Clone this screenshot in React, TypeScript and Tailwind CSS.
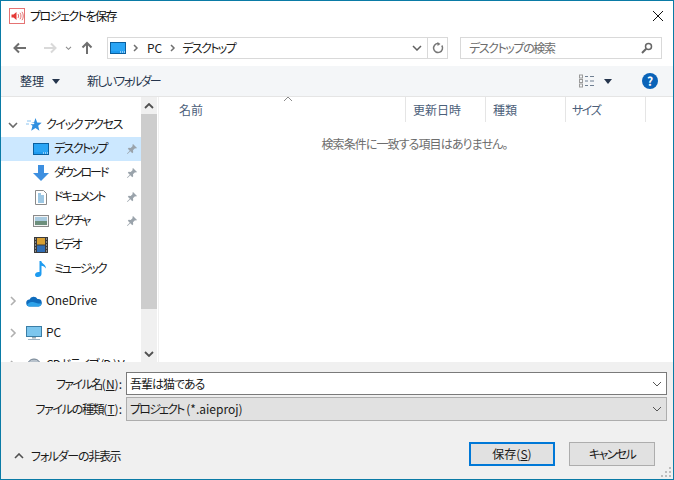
import React from "react";

const jp = "font-['Noto_Sans_CJK_JP','Noto_Sans',sans-serif] [font-feature-settings:'palt']";

function DesktopIcon({ className = "" }: { className?: string }) {
  return (
    <svg viewBox="0 0 16 12" className={className}>
      <rect x="0.5" y="0.5" width="15" height="11" fill="#1e9bf0" stroke="#0a5f9e" />
      <rect x="1" y="1" width="14" height="8" fill="#2aa5f5" />
      <rect x="10" y="9.500" width="1" height="1" fill="#fff" />
      <rect x="12" y="9.500" width="1" height="1" fill="#fff" />
      <rect x="14" y="9.500" width="1" height="1" fill="#fff" />
    </svg>
  );
}

function Pin() {
  return (
    <svg viewBox="0 0 12 12" className="h-3 w-3">
      <path d="M7 1l4 4-1 .6-1-.3-2 2 .2 2-.9.9-2-2L1.500 11 1 10.500l2.800-2.800-2-2 .9-.9 2 .2 2-2-.3-1z" fill="#9aa3ab" />
    </svg>
  );
}

function Chevron({ open }: { open?: boolean }) {
  return (
    <svg viewBox="0 0 10 10" className="h-2.5 w-2.5">
      {open ? (
        <path d="M1 3l4 4 4-4" fill="none" stroke="#6a6a6a" strokeWidth="1.600" />
      ) : (
        <path d="M3 1l4 4-4 4" fill="none" stroke="#b0b0b0" strokeWidth="1.600" />
      )}
    </svg>
  );
}

function Row({
  icon,
  label,
  pinned,
  active,
  track = "tracking-[-1.7px]",
}: {
  icon: React.ReactNode;
  label: string;
  pinned?: boolean;
  active?: boolean;
  track?: string;
}) {
  return (
    <div className={`flex h-6 items-center pl-[32px] pr-[3px] ${active ? "bg-[#cce8ff]" : ""}`}>
      <div className="flex w-[16px] justify-center">{icon}</div>
      <span className={`ml-[5px] flex-1 whitespace-nowrap pb-[2px] text-[12px] text-[#1a1a1a] ${track}`}>{label}</span>
      {pinned && <Pin />}
    </div>
  );
}

function TreeRoot({
  icon,
  label,
  open,
  track = "",
}: {
  icon: React.ReactNode;
  label: string;
  open?: boolean;
  track?: string;
}) {
  return (
    <div className="flex h-6 items-center pl-[7px]">
      <div className="flex w-[17px]">
        <Chevron open={open} />
      </div>
      <div className="flex w-[18px] justify-center">{icon}</div>
      <span className={`ml-[3px] whitespace-nowrap pb-[2px] text-[12px] text-[#1a1a1a] ${track}`}>{label}</span>
    </div>
  );
}

function HeaderCell({ label, className }: { label: string; className: string }) {
  return (
    <div className={`flex h-[25px] items-center border-r border-[#e5e5e5] text-[12px] text-[#4c607a] ${className}`}>
      {label}
    </div>
  );
}

function SelectChevron() {
  return (
    <svg viewBox="0 0 10 6" className="h-[6px] w-[10px]">
      <path d="M1 1l4 4 4-4" fill="none" stroke="#555" strokeWidth="1" />
    </svg>
  );
}

export default function App() {
  return (
    <div className={`flex h-[480px] w-[674px] flex-col overflow-hidden border border-[#0a7ba6] bg-white ${jp}`}>
      {/* title bar */}
      <div className="flex h-[29px] shrink-0 items-center pl-[8px] pr-[9px]">
        <svg viewBox="0 0 16 16" className="h-4 w-4">
          <rect x="0.5" y="0.5" width="15" height="15" fill="#fff" stroke="#e57373" />
          <path d="M2.500 6.500h2l3-2.500v8l-3-2.500h-2z" fill="#e53935" />
          <path d="M9 6c.8 1.200.8 2.800 0 4M11 4.800c1.300 2 1.300 4.400 0 6.400M13 3.800c1.700 2.600 1.700 5.800 0 8.400" fill="none" stroke="#e57373" />
        </svg>
        <span className="ml-[5px] flex-1 text-[12px] tracking-[-1.5px] text-[#111]">プロジェクトを保存</span>
        <svg viewBox="0 0 12 12" className="h-3 w-3">
          <path d="M1 1l10 10M11 1L1 11" stroke="#111" strokeWidth="1" />
        </svg>
      </div>

      {/* address row */}
      <div className="flex h-[36px] shrink-0 items-start pt-[7px]">
        <div className="flex h-[22px] w-[106px] items-center">
          <svg viewBox="0 0 14 12" className="ml-[12px] h-3 w-[14px]">
            <path d="M13 6H2M6 1.500L1.500 6 6 10.500" fill="none" stroke="#6f6f6f" strokeWidth="2" />
          </svg>
          <svg viewBox="0 0 14 12" className="ml-[16px] h-3 w-[14px]">
            <path d="M1 6h11M8 1.500L12.500 6 8 10.500" fill="none" stroke="#d9d9d9" strokeWidth="2" />
          </svg>
          <svg viewBox="0 0 8 6" className="ml-[8px] h-[5px] w-[7px]">
            <path d="M1 1l3 3 3-3" fill="none" stroke="#8a8a8a" strokeWidth="1.300" />
          </svg>
          <svg viewBox="0 0 12 14" className="ml-[9px] h-[14px] w-3">
            <path d="M6 13V2M1.500 6.500L6 2l4.500 4.500" fill="none" stroke="#6f6f6f" strokeWidth="2" />
          </svg>
        </div>
        <div className="flex h-[22px] w-[341px] items-center border border-[#d9d9d9]">
          <DesktopIcon className="ml-[2px] h-3 w-4" />
          <svg viewBox="0 0 6 8" className="ml-[7px] h-2 w-[6px]">
            <path d="M1 1l3 3-3 3" fill="none" stroke="#707070" strokeWidth="1.500" />
          </svg>
          <span className="ml-[8px] text-[12px] text-[#222]">PC</span>
          <svg viewBox="0 0 6 8" className="ml-[8px] h-2 w-[6px]">
            <path d="M1 1l3 3-3 3" fill="none" stroke="#707070" strokeWidth="1.500" />
          </svg>
          <span className="ml-[6px] flex-1 text-[12px] tracking-[-1.6px] text-[#222]">デスクトップ</span>
          <svg viewBox="0 0 10 6" className="mr-[5px] h-[6px] w-[10px]">
            <path d="M1 1l4 4 4-4" fill="none" stroke="#606060" strokeWidth="1.500" />
          </svg>
          <div className="flex h-full w-[20px] items-center justify-center border-l border-[#d9d9d9]">
            <svg viewBox="0 0 12 12" className="h-3 w-3">
              <path d="M9.800 3.500A4.500 4.500 0 1 1 6 1.500" fill="none" stroke="#777" strokeWidth="1.500" />
              <path d="M5.500 0v4l3-2z" fill="#777" />
            </svg>
          </div>
        </div>
        <div className="ml-[12px] flex h-[22px] w-[202px] items-center border border-[#d9d9d9] pl-[8px] pr-[8px]">
          <span className="flex-1 text-[12px] tracking-[-1.4px] text-[#6d6d6d]">デスクトップの検索</span>
          <svg viewBox="0 0 12 12" className="h-3 w-3">
            <circle cx="7.500" cy="4.500" r="3" fill="none" stroke="#666" strokeWidth="1.500" />
            <path d="M5.200 6.800L1 11" stroke="#666" strokeWidth="2" />
          </svg>
        </div>
      </div>

      {/* toolbar */}
      <div className="flex h-[31px] shrink-0 items-center border-b border-[#e5e5e5] bg-[#f4f6f8] pl-[19px] pr-[15px] text-[12px] text-[#25354d]">
        <span>整理</span>
        <svg viewBox="0 0 8 5" className="ml-[8px] h-[5px] w-2">
          <path d="M0 0h8L4 5z" fill="#25354d" />
        </svg>
        <span className="ml-[27px] flex-1 tracking-[-1.75px]">新しいフォルダー</span>
        <svg viewBox="0 0 16 14" className="h-[14px] w-4">
          <rect x="0.500" y="1" width="3" height="3" fill="none" stroke="#9a9a9a" strokeWidth="1" />
          <rect x="0.500" y="5.500" width="3" height="3" fill="none" stroke="#9a9a9a" strokeWidth="1" />
          <rect x="0.500" y="10" width="3" height="3" fill="none" stroke="#9a9a9a" strokeWidth="1" />
          <path d="M6 2.500h3M11 2.500h4M6 7h3M11 7h4M6 11.500h3M11 11.500h4" stroke="#6f7f92" strokeWidth="1" />
        </svg>
        <svg viewBox="0 0 8 5" className="ml-[9px] h-[5px] w-2">
          <path d="M0 0h8L4 5z" fill="#25354d" />
        </svg>
        <div className="ml-[30px] flex h-4 w-4 items-center justify-center rounded-full bg-[#0a63b8] text-[12px] font-bold leading-none text-white">
          ?
        </div>
      </div>

      {/* main */}
      <div className="flex min-h-0 flex-1">
        <div className="relative w-[140px] shrink-0 overflow-hidden pt-[16px]">
          <TreeRoot
            open
            label="クイック アクセス"
            track="tracking-[-1.3px]"
            icon={
              <svg viewBox="0 0 16 16" className="h-4 w-4">
                <path d="M9.500 1l1.700 4.500 4.500.3-3.500 3 1.200 5-3.900-2.700-4.300 2.700 1.300-5-2-1.600h3l1.200-1L5 5.500h3z" fill="#2f8fe0" />
                <path d="M1 4h4M0 7h3" stroke="#8cc4f0" strokeWidth="1" />
              </svg>
            }
          />
          <Row active pinned label="デスクトップ" track="tracking-[-1.6px]" icon={<DesktopIcon className="h-3 w-4" />} />
          <Row
            pinned
            label="ダウンロード"
            track="tracking-[-2px]"
            icon={
              <svg viewBox="0 0 16 16" className="h-4 w-4">
                <path d="M5 0h6v8h5l-8 8-8-8h5z" fill="#3d8fe0" />
              </svg>
            }
          />
          <Row
            pinned
            label="ドキュメント"
            track="tracking-[-1.8px]"
            icon={
              <svg viewBox="0 0 12 15" className="h-[15px] w-3">
                <path d="M.5.500h8l3 3v11H.5z" fill="#fff" stroke="#8a8a8a" />
                <path d="M3 4h3M3 6h6M3 8h6M3 10h6M3 12h6" stroke="#3a8fc8" strokeWidth="1" />
              </svg>
            }
          />
          <Row
            pinned
            label="ピクチャ"
            icon={
              <svg viewBox="0 0 16 12" className="h-3 w-4">
                <rect x="0.500" y="0.500" width="15" height="11" fill="#f4f4f4" stroke="#8a8a8a" />
                <rect x="2" y="2" width="12" height="4" fill="#a9cbe0" />
                <path d="M2 6h12v4H2z" fill="#6d8f7c" />
              </svg>
            }
          />
          <Row
            label="ビデオ"
            track="tracking-[-2.300px]"
            icon={
              <svg viewBox="0 0 14 16" className="h-4 w-[14px]">
                <rect width="14" height="16" fill="#3a3a3a" />
                <rect x="3" y="1" width="8" height="6.500" fill="#d8a032" />
                <rect x="3" y="8.500" width="8" height="6.500" fill="#2f6db5" />
                <path d="M1 2h1M1 5h1M1 8h1M1 11h1M1 14h1M12 2h1M12 5h1M12 8h1M12 11h1M12 14h1" stroke="#ddd" strokeWidth="1" />
              </svg>
            }
          />
          <Row
            label="ミュージック"
            track="tracking-[-2px]"
            icon={
              <svg viewBox="0 0 12 16" className="h-4 w-3">
                <path d="M4.500 0h1.800c.3 2.500 4.700 3.500 4.700 7.500-1-1.800-3-2.500-4.500-2.800V13c0 1.700-1.600 3-3.500 3S0 15.200 0 13.700s1.700-2.700 3.500-2.700c.4 0 .7 0 1 .1z" fill="#1e9bf0" />
              </svg>
            }
          />
          <div className="mt-[8px]">
            <TreeRoot
              label="OneDrive"
              track="tracking-[-0.1px]"
              icon={
                <svg viewBox="0 0 16 11" className="h-[11px] w-4">
                  <path d="M4 10.500a3.500 3.500 0 0 1-.5-7A4.500 4.500 0 0 1 11.500 3 3.500 3.500 0 0 1 12.500 10.500z" fill="#0f6cbd" />
                  <path d="M1 9c1-2 3-3.500 6-3s5 2 8 1.500c.6 1.500-.6 3-2.500 3H4C2.700 10.500 1.700 10 1 9z" fill="#2ea3ea" />
                </svg>
              }
            />
          </div>
          <div className="mt-[8px]">
            <TreeRoot
              label="PC"
              icon={
                <svg viewBox="0 0 16 14" className="h-[14px] w-4">
                  <rect x="0.500" y="0.500" width="15" height="10" fill="#7cc6ee" stroke="#3b7ea6" />
                  <path d="M6 11h4v1.500H6z" fill="#9aa8b0" />
                  <path d="M2 13h12v1H2z" fill="#9fb4c4" />
                </svg>
              }
            />
          </div>
          <div className="mt-[8px]">
            <TreeRoot
              label="CD ドライブ (D:) V"
              track="tracking-[-1px]"
              icon={
                <svg viewBox="0 0 16 14" className="h-[14px] w-4">
                  <ellipse cx="8" cy="6" rx="6" ry="5" fill="#b8c2cc" stroke="#6f7f8f" />
                  <circle cx="8" cy="6" r="1.500" fill="#fff" />
                </svg>
              }
            />
          </div>
        </div>

        <div className="flex w-[16px] shrink-0 flex-col bg-[#f0f0f0]">
          <div className="flex h-[17px] items-center justify-center">
            <svg viewBox="0 0 10 6" className="h-[6px] w-[10px]">
              <path d="M1 5l4-4 4 4" fill="none" stroke="#505050" strokeWidth="1.800" />
            </svg>
          </div>
          <div className="h-[195px] bg-[#cdcdcd]" />
          <div className="flex-1" />
          <div className="flex h-[17px] items-center justify-center">
            <svg viewBox="0 0 10 6" className="h-[6px] w-[10px]">
              <path d="M1 1l4 4 4-4" fill="none" stroke="#505050" strokeWidth="1.800" />
            </svg>
          </div>
        </div>

        <div className="relative ml-[1px] flex-1 border-l border-[#f0f0f0]">
          <div className="flex">
            <HeaderCell label="名前" className="w-[247px] pl-[20px]" />
            <HeaderCell label="更新日時" className="w-[80px] pl-[7px]" />
            <HeaderCell label="種類" className="w-[80px] pl-[7px]" />
            <HeaderCell label="サイズ" className="w-[80px] pl-[6px] tracking-[-1.500px]" />
          </div>
          <svg viewBox="0 0 8 4" className="absolute left-[125px] top-0 h-1 w-2">
            <path d="M0 4l4-4 4 4" fill="none" stroke="#8a8a8a" strokeWidth="1" />
          </svg>
          <p className="mt-[13px] pr-[3px] text-center text-[12px] leading-[18px] tracking-[-0.9px] text-[#6d6d6d]">
            検索条件に一致する項目はありません。
          </p>
        </div>
      </div>

      {/* bottom */}
      <div className="relative flex h-[117px] shrink-0 flex-col bg-[#f0f0f0] pl-[5px] pr-[6px] pt-[10px] text-[12px] text-[#1a1a1a]">
        <div className="flex h-[23px] items-center">
          <label className="w-[116px] text-right">
            <span className="tracking-[-1.500px]">ファイル名</span>(<span className="underline">N</span>):
          </label>
          <div className="ml-[4px] flex h-[23px] flex-1 items-center border border-[#7a7a7a] bg-white pl-[3px] pr-[4px]">
            <span className="flex-1 tracking-[-1px]">吾輩は猫である</span>
            <SelectChevron />
          </div>
        </div>
        <div className="mt-[2px] flex h-[24px] items-center">
          <label className="w-[116px] text-right">
            <span className="tracking-[-1.300px]">ファイルの種類</span>(<span className="underline">T</span>):
          </label>
          <div className="ml-[4px] flex h-[24px] flex-1 items-center border border-[#adadad] bg-[#e1e1e1] pl-[3px] pr-[4px]">
            <span className="flex-1">
              <span className="tracking-[-1.800px]">プロジェクト</span> (*.aieproj)
            </span>
            <SelectChevron />
          </div>
        </div>
        <div className="mt-[21px] flex items-center">
          <svg viewBox="0 0 10 6" className="ml-[8px] mt-[4px] h-[6px] w-[10px]">
            <path d="M1 5l4-4 4 4" fill="none" stroke="#505050" strokeWidth="1.600" />
          </svg>
          <span className="ml-[7px] mt-[4px] flex-1 tracking-[-1.300px]">フォルダーの非表示</span>
          <button className="flex h-[24px] w-[86px] items-center justify-center border-2 border-[#0078d7] bg-[#e1e1e1]">
            <span>
              保存(<span className="underline">S</span>)
            </span>
          </button>
          <button className="ml-[14px] mr-[12px] flex h-[24px] w-[86px] items-center justify-center border border-[#adadad] bg-[#e1e1e1] tracking-[-1.600px]">
            キャンセル
          </button>
        </div>
        <svg viewBox="0 0 11 11" className="absolute bottom-[1px] right-[1px] h-[11px] w-[11px]">
          <path d="M8 0h2v2H8zM4 4h2v2H4zM8 4h2v2H8zM0 8h2v2H0zM4 8h2v2H4zM8 8h2v2H8z" fill="#bdbdbd" />
        </svg>
      </div>
    </div>
  );
}
